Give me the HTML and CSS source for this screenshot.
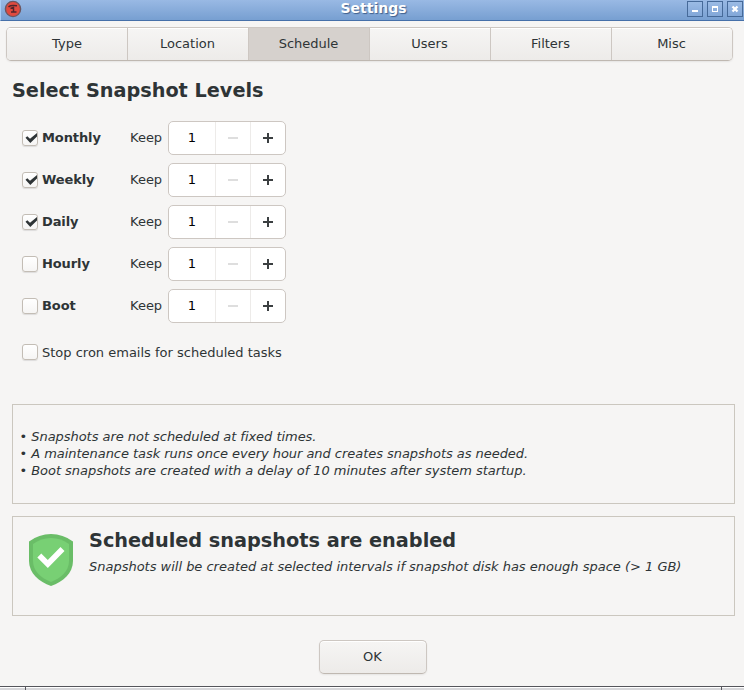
FILE: index.html
```html
<!DOCTYPE html>
<html lang="en">
<head>
<meta charset="utf-8">
<title>Settings</title>
<link rel="stylesheet" href="styles.css">
</head>
<body>
<div class="window">
  <header class="titlebar">
    <svg class="app-icon" width="18" height="18" viewBox="0 0 18 18">
      <circle cx="9" cy="9" r="7.600" fill="#e04a3f" stroke="#6d5660" stroke-width="1.400"/>
      <path d="M4.500 6.800Q7 4.800 13 5.800M6.500 8.500L10 7.200M9.500 7V11.500M7 12H12.500" fill="none" stroke="#51262c" stroke-width="1.500"/>
    </svg>
    <span class="caption">Settings</span>
    <div class="controls">
      <span class="control"><svg width="14" height="14"><path d="M4 8h6v2H4z" fill="#fff"/></svg></span>
      <span class="control"><svg width="14" height="14"><path d="M4 4h6v6H4zM5 6v3h4V6z" fill="#fff" fill-rule="evenodd"/></svg></span>
      <span class="control"><svg width="14" height="14"><path d="M4.500 4.500l5 5M9.500 4.500l-5 5" stroke="#fff" stroke-width="2.300"/></svg></span>
    </div>
  </header>
  <nav class="tabs">
    <span class="tab">Type</span>
    <span class="tab">Location</span>
    <span class="tab active">Schedule</span>
    <span class="tab">Users</span>
    <span class="tab">Filters</span>
    <span class="tab">Misc</span>
  </nav>
  <main class="content">
    <h1>Select Snapshot Levels</h1>
    <div class="levels">
      <div class="level"><span class="check"><svg width="16" height="16" viewBox="0 0 16 16"><path d="M3.500 7.800L5.300 6.200 8 8.800 15 3V6.600L8.300 13z" fill="#2e3436"/></svg></span><b>Monthly</b><span class="keep">Keep</span><div class="spin"><span class="value">1</span><span class="step minus"></span><span class="step plus"></span></div></div>
      <div class="level"><span class="check"><svg width="16" height="16" viewBox="0 0 16 16"><path d="M3.500 7.800L5.300 6.200 8 8.800 15 3V6.600L8.300 13z" fill="#2e3436"/></svg></span><b>Weekly</b><span class="keep">Keep</span><div class="spin"><span class="value">1</span><span class="step minus"></span><span class="step plus"></span></div></div>
      <div class="level"><span class="check"><svg width="16" height="16" viewBox="0 0 16 16"><path d="M3.500 7.800L5.300 6.200 8 8.800 15 3V6.600L8.300 13z" fill="#2e3436"/></svg></span><b>Daily</b><span class="keep">Keep</span><div class="spin"><span class="value">1</span><span class="step minus"></span><span class="step plus"></span></div></div>
      <div class="level"><span class="check"></span><b>Hourly</b><span class="keep">Keep</span><div class="spin"><span class="value">1</span><span class="step minus"></span><span class="step plus"></span></div></div>
      <div class="level"><span class="check"></span><b>Boot</b><span class="keep">Keep</span><div class="spin"><span class="value">1</span><span class="step minus"></span><span class="step plus"></span></div></div>
    </div>
    <div class="cron"><span class="check"></span><span>Stop cron emails for scheduled tasks</span></div>
    <section class="panel notes">
      <p>• Snapshots are not scheduled at fixed times.</p>
      <p>• A maintenance task runs once every hour and creates snapshots as needed.</p>
      <p>• Boot snapshots are created with a delay of 10 minutes after system startup.</p>
    </section>
    <section class="panel status">
      <svg class="shield" width="44" height="52" viewBox="0 0 44 52">
        <path d="M0 7.500Q10 0 22 0T44 7.500V27C44 39 34 48 22 52 10 48 0 39 0 27Z" fill="#6abd67"/>
        <path d="M4 10Q12 4 22 4T40 10V27C40 37 32 44 22 48 12 44 4 37 4 27Z" fill="#78d074"/>
        <path d="M10.300 21.500l8.500 8.500L33.500 15" fill="none" stroke="#fff" stroke-width="5.600"/>
      </svg>
      <div>
        <h2>Scheduled snapshots are enabled</h2>
        <p>Snapshots will be created at selected intervals if snapshot disk has enough space (&gt; 1 GB)</p>
      </div>
    </section>
  </main>
  <button class="ok">OK</button>
  <footer class="frame"><i></i><i></i><i></i></footer>
</div>
</body>
</html>
```

FILE: styles.css
```css
* { box-sizing: border-box; }
body { margin: 0; background: #f6f5f4; color: #2e3436; font: 13px/17px "DejaVu Sans", sans-serif; }
h1, h2, p { margin: 0; }
svg { display: block; }
.window { width: 744px; height: 690px; display: flex; flex-direction: column; overflow: hidden; }
.titlebar { height: 21px; flex: none; display: grid; grid-template-columns: 61px 1fr 61px; align-items: start; background: linear-gradient(#99b9e4, #779fd1); border-bottom: 1px solid #4670a9; border-left: 1px solid #a9cdf5; }
.app-icon { margin: 0 0 0 3px; }
.caption { text-align: center; color: #fff; font-size: 14px; font-weight: bold; text-shadow: 1px 1px 1px #3f5f8c; margin-left: 2px; }
.controls { display: flex; gap: 4px; padding: 1px 0 0 4px; }
.control { width: 16px; height: 16px; flex: none; border: 1px solid #466a99; background: linear-gradient(#9bbbe5, #82a7d8); }
.tabs { display: flex; flex: none; margin: 6px 11px 0 6px; height: 34px; border: 1px solid #cdc7c2; border-bottom-color: #bfb8b1; border-radius: 5px; box-shadow: 0 1px 2px rgba(0,0,0,.07); overflow: hidden; }
.tab { flex: 0 0 121px; text-align: center; line-height: 32px; padding-right: 1px; border-right: 1px solid #cdc7c2; background: linear-gradient(#f6f5f4, #edebe9); box-shadow: inset 0 1px #fff; }
.tab:first-child { padding-right: 0; }
.tab:last-child { border-right: 0; flex-basis: 120px; }
.tab.active { background: #d6d1cd; box-shadow: none; }
.content { padding: 0 9px 0 12px; }
h1 { font-size: 19.250px; line-height: 24px; margin-top: 18px; }
.levels { display: grid; gap: 8px; margin: 18px 0 0 10px; }
.level { display: grid; grid-template-columns: 20px 88px 38px 118px; height: 34px; align-items: center; }
.level b, .keep { position: relative; top: -1px; }
.level b { letter-spacing: -.1px; }
.check { width: 16px; height: 16px; border: 1px solid #c3bdb5; border-radius: 3px; background: linear-gradient(#fff, #f6f5f4); box-shadow: 0 1px 1px rgba(0,0,0,.1); }
.check svg { margin: -1px; }
.spin { display: grid; grid-template-columns: 46px 35px 35px; height: 34px; border: 1px solid #cdc7c2; border-radius: 5px; background: #fff; overflow: hidden; }
.value { color: #000; text-align: center; line-height: 32px; }
.step { border-left: 1px solid #edebe9; background-repeat: no-repeat; }
.minus { background-image: linear-gradient(#dedede, #dedede); background-size: 10px 2px; background-position: 12px 15px; }
.plus { background-image: linear-gradient(#3b3f41, #3b3f41), linear-gradient(#3b3f41, #3b3f41); background-size: 10px 2px, 2px 10px; background-position: 12px 15px, 16px 11px; }
.cron { display: grid; grid-template-columns: 20px auto; margin: 21px 0 0 10px; height: 17px; }
.panel { height: 100px; border: 1px solid #cbc7bf; }
.notes { margin-top: 43px; padding: 23px 6.500px; font-style: italic; letter-spacing: -.04px; }
.status { margin-top: 12px; display: flex; gap: 16px; padding: 12px 16px; }
.shield { margin-top: 5px; flex: none; }
h2 { font-size: 19.300px; line-height: 24px; }
.status p { font-style: italic; white-space: nowrap; margin-top: 5px; letter-spacing: -.01px; }
.ok { font: inherit; color: inherit; flex: none; width: 108px; height: 34px; margin: 24px 0 0 319px; padding: 0 1px 1px 0; border: 1px solid #cdc7c2; border-bottom-color: #bfb8b1; border-radius: 5px; background: linear-gradient(#f6f5f4, #edebe9); box-shadow: inset 0 1px #fff, 0 1px 2px rgba(0,0,0,.07); }
.frame { display: grid; grid-template-columns: 26px 1fr 22px; flex: none; height: 4px; margin-top: 12px; border-top: 1px solid #55555b; }
.frame i { background: linear-gradient(#fff 1px, #d6d6d9 1px); border-right: 1px solid #55555b; }
.frame i:last-child { border: 0; }
```
